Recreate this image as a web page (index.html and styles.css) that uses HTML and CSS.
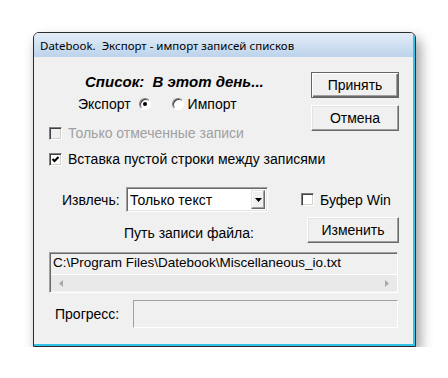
FILE: index.html
```html
<!DOCTYPE html>
<html lang="ru">
  <head>
    <meta charset="UTF-8" />
    <title>Datebook. Экспорт - импорт записей списков</title>
    <link rel="stylesheet" href="styles.css">
  </head>
  <body>
    <div class="window">
      <div class="frame">
        <div class="titlebar">Datebook.&nbsp; Экспорт - импорт записей списков</div>
        <div class="client">
          <div class="top">
            <div class="options">
              <div class="heading">Список:&nbsp; В этот день...</div>
              <div class="direction">
                <span>Экспорт</span>
                <span class="radio checked"></span>
                <span class="radio second"></span>
                <span>Импорт</span>
              </div>
              <div class="check-row disabled">
                <span class="checkbox"></span>
                <span>Только отмеченные записи</span>
              </div>
            </div>
            <div class="actions">
              <button class="btn default">Принять</button>
              <button class="btn">Отмена</button>
            </div>
          </div>

          <div class="check-row blank-line">
            <span class="checkbox">
              <svg width="7" height="7" viewBox="0 0 7 7"><polyline points="0.5,3 2.5,5 6.5,1" fill="none" stroke="#000" stroke-width="2"/></svg>
            </span>
            <span>Вставка пустой строки между записями</span>
          </div>

          <div class="extract-row">
            <span class="extract-label">Извлечь:</span>
            <div class="combo">
              <span class="combo-value">Только текст</span>
              <span class="combo-arrow">
                <svg width="7" height="4" viewBox="0 0 7 4"><polygon points="0,0 7,0 3.5,4" fill="#000"/></svg>
              </span>
            </div>
            <div class="check-row buffer">
              <span class="checkbox"></span>
              <span>Буфер Win</span>
            </div>
          </div>

          <div class="path-row">
            <span class="path-label">Путь записи файла:</span>
            <button class="btn change">Изменить</button>
          </div>

          <div class="path-box">
            <div class="path-text">C:\Program Files\Datebook\Miscellaneous_io.txt</div>
            <div class="hscroll">
              <svg width="4" height="7" viewBox="0 0 4 7"><polygon points="4,0 4,7 0,3.5" fill="#a8a8a8"/></svg>
              <svg width="4" height="7" viewBox="0 0 4 7"><polygon points="0,0 0,7 4,3.5" fill="#a8a8a8"/></svg>
            </div>
          </div>

          <div class="progress-row">
            <span class="progress-label">Прогресс:</span>
            <div class="progress"></div>
          </div>
        </div>
      </div>
    </div>
  </body>
</html>
```

FILE: styles.css
```css
body {
  margin: 0;
  padding: 32px 0 0 33px;
  background: #fff;
  font-family: "Liberation Sans", Arial, sans-serif;
  font-size: 14px;
  color: #000;
}
.window {
  width: 383px;
  box-sizing: border-box;
  border: 1px solid #2b2b2b;
  border-radius: 6px 6px 0 0;
  box-shadow: 4px 7px 13px rgba(0, 0, 0, 0.4);
  overflow: hidden;
  background: #f0f0f0;
}
.frame {
  border-right: 2px solid #33c3e9;
  border-bottom: 2px solid #33c3e9;
}
.titlebar {
  height: 24px;
  line-height: 25px;
  padding-left: 6px;
  font-family: "Noto Sans", sans-serif;
  font-size: 11.5px;
  background: linear-gradient(#e4edf8, #bcd3eb);
  white-space: nowrap;
}
.client {
  height: 287px;
  box-sizing: border-box;
  padding: 15px 14px 0 0;
}

/* top block */
.top {
  display: flex;
}
.options {
  flex: 1;
}
.heading {
  margin-left: 51px;
  height: 20px;
  line-height: 20px;
  font-size: 15px;
  font-weight: bold;
  font-style: italic;
}
.direction {
  display: flex;
  align-items: center;
  height: 20px;
  margin: 2px 0 0 44px;
}
.radio {
  position: relative;
  width: 12px;
  height: 12px;
  box-sizing: border-box;
  margin-left: 8px;
  border-radius: 50%;
  border: 1px solid;
  border-color: #808080 #fff #fff #808080;
  box-shadow: inset 1px 1px #404040;
  background: #fff;
}
.radio.checked::after {
  content: "";
  position: absolute;
  left: 3px;
  top: 3px;
  width: 4px;
  height: 4px;
  border-radius: 50%;
  background: #000;
}
.radio.second {
  margin: 0 4px 0 21px;
}
.actions {
  display: flex;
  flex-direction: column;
  gap: 7px;
}

/* checkboxes */
.check-row {
  display: flex;
  align-items: center;
  gap: 6px;
  height: 20px;
  padding-left: 15px;
}
.check-row.disabled {
  margin-top: 9px;
  color: #a0a0a0;
}
.check-row.blank-line {
  margin-top: 6px;
}
.checkbox {
  display: flex;
  align-items: center;
  justify-content: center;
  width: 13px;
  height: 13px;
  box-sizing: border-box;
  border: 1px solid;
  border-color: #808080 #fff #fff #808080;
  box-shadow: inset 1px 1px #404040, inset -1px -1px #d4d0c8;
  background: #fff;
}
.disabled .checkbox {
  background: #f0f0f0;
}

/* buttons */
.btn {
  width: 88px;
  height: 26px;
  padding: 0;
  font: inherit;
  color: #000;
  background: #f0f0f0;
  border: 1px solid;
  border-color: #fff #696969 #696969 #fff;
  box-shadow: inset -1px -1px #a0a0a0, inset 1px 1px #e3e3e3;
}
.btn.default {
  border-color: #646464;
  box-shadow: inset 1px 1px #fff, inset -1px -1px #696969, inset -2px -2px #a0a0a0;
}
.btn.change {
  width: 92px;
  margin-left: auto;
}

/* extract row */
.extract-row {
  display: flex;
  align-items: center;
  margin-top: 18px;
  padding-left: 28px;
}
.extract-label {
  width: 64px;
}
.combo {
  display: flex;
  align-items: center;
  width: 142px;
  height: 25px;
  box-sizing: border-box;
  padding: 2px;
  border: 1px solid;
  border-color: #a0a0a0 #fff #fff #a0a0a0;
  box-shadow: inset 1px 1px #696969, inset -1px -1px #e3e3e3;
  background: #fff;
}
.combo-value {
  flex: 1;
  padding-left: 1px;
}
.combo-arrow {
  display: flex;
  align-items: center;
  justify-content: center;
  width: 14px;
  height: 19px;
  box-sizing: border-box;
  border: 1px solid;
  border-color: #e3e3e3 #696969 #696969 #e3e3e3;
  box-shadow: inset -1px -1px #a0a0a0, inset 1px 1px #fff;
  background: #f0f0f0;
}
.check-row.buffer {
  padding-left: 33px;
}

/* path */
.path-row {
  display: flex;
  align-items: center;
  margin-top: 5px;
  padding-left: 90px;
}
.path-label {
  padding-top: 5px;
}
.path-box {
  width: 349px;
  height: 41px;
  box-sizing: border-box;
  margin: 9px 0 0 15px;
  border: 1px solid;
  border-color: #a0a0a0 #fff #fff #a0a0a0;
  box-shadow: inset 1px 1px #696969;
  background: #f0f0f0;
}
.path-text {
  height: 21px;
  line-height: 20px;
  padding-left: 3px;
  font-size: 13.5px;
  white-space: nowrap;
}
.hscroll {
  display: flex;
  align-items: center;
  justify-content: space-between;
  height: 16px;
  margin-left: 1px;
  padding: 0 8px;
  border-top: 1px solid #fff;
  background: #e9e9e9;
}

/* progress */
.progress-row {
  display: flex;
  align-items: center;
  margin-top: 7px;
  padding-left: 21px;
}
.progress-label {
  width: 78px;
}
.progress {
  width: 265px;
  height: 28px;
  box-sizing: border-box;
  border: 1px solid;
  border-color: #a0a0a0 #fff #fff #a0a0a0;
}
```
